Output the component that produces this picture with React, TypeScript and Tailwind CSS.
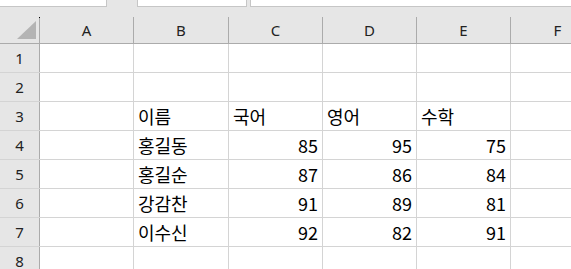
const COLS = [
  { key: 'A', w: 'w-[94px]' },
  { key: 'B', w: 'w-[95px]' },
  { key: 'C', w: 'w-[94px]' },
  { key: 'D', w: 'w-[94px]' },
  { key: 'E', w: 'w-[94px]' },
  { key: 'F', w: 'w-[94px]' },
];

type Cell = { v: string; num?: boolean };

const ROWS: Record<number, Record<string, Cell>> = {
  3: { B: { v: '이름' }, C: { v: '국어' }, D: { v: '영어' }, E: { v: '수학' } },
  4: { B: { v: '홍길동' }, C: { v: '85', num: true }, D: { v: '95', num: true }, E: { v: '75', num: true } },
  5: { B: { v: '홍길순' }, C: { v: '87', num: true }, D: { v: '86', num: true }, E: { v: '84', num: true } },
  6: { B: { v: '강감찬' }, C: { v: '91', num: true }, D: { v: '89', num: true }, E: { v: '81', num: true } },
  7: { B: { v: '이수신' }, C: { v: '92', num: true }, D: { v: '82', num: true }, E: { v: '91', num: true } },
};

export default function App() {
  return (
    <div className="w-[571px] h-[269px] overflow-hidden bg-white text-black">
      {/* formula bar remnants */}
      <div className="h-[17px] bg-[#e6e6e6] flex items-start">
        <div className="w-[107px] h-[7px] bg-white border-r border-b border-[#c6c6c6]" />
        <div className="ml-[30px] w-[110px] h-[7px] bg-white border-x border-b border-[#c6c6c6]" />
        <div className="ml-[3px] flex-1 h-[7px] bg-white border-l border-b border-[#c6c6c6]" />
      </div>

      {/* column headers */}
      <div className="flex h-[27px] bg-[#e6e6e6] border-b border-[#ababab]">
        <div className="relative w-[40px] shrink-0 border-r border-[#ababab]">
          <div className="absolute right-[-1px] top-0 w-px h-px bg-black" />
          <svg className="absolute left-[17px] top-[4px]" width="20" height="19" viewBox="0 0 20 19">
            <polygon points="19,0 19,18 0,18" fill="#b4b4b4" />
          </svg>
        </div>
        {COLS.map(c => (
          <div
            key={c.key}
            className={`${c.w} shrink-0 border-r border-[#ababab] flex items-center justify-center text-[15px] text-[#222] font-['Noto_Sans',sans-serif] pt-[1px]`}
          >
            {c.key}
          </div>
        ))}
      </div>

      {/* rows */}
      {[1, 2, 3, 4, 5, 6, 7, 8].map(r => (
        <div key={r} className="flex h-[29px] border-b border-[#d4d4d4]">
          <div className="w-[40px] shrink-0 bg-[#e6e6e6] border-r border-[#ababab] flex items-center justify-center text-[15px] text-[#222] font-['Noto_Sans',sans-serif] pt-[1px]">
            {r}
          </div>
          {COLS.map(c => {
            const cell = ROWS[r]?.[c.key];
            return (
              <div
                key={c.key}
                className={`${c.w} shrink-0 border-r border-[#d4d4d4] flex items-center px-[4px] text-[18px] leading-none font-['Noto_Sans_CJK_KR',sans-serif] ${cell?.num ? 'justify-end' : 'justify-start'}`}
              >
                {cell?.v}
              </div>
            );
          })}
        </div>
      ))}
    </div>
  );
}
